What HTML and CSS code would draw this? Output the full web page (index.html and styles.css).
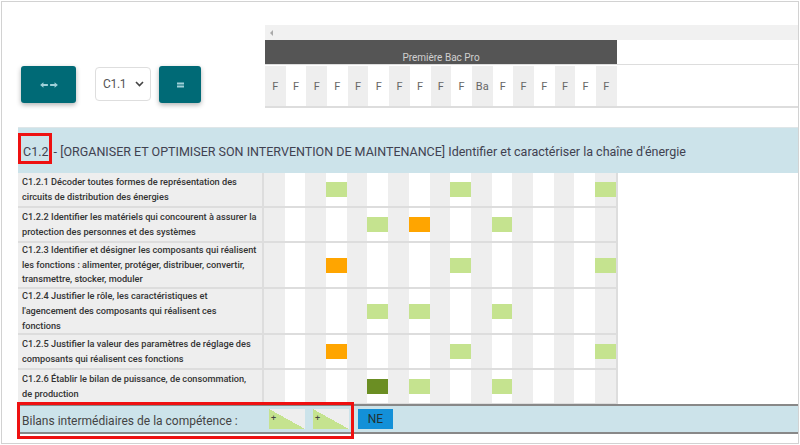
FILE: index.html
```html
<!DOCTYPE html>
<html lang="fr">

<head>
    <meta charset="UTF-8">
    <meta name="viewport" content="width=device-width, initial-scale=1.0">
    <title>Compétences</title>
    <link rel="stylesheet" href="styles.css">
</head>

<body>
    <div class="page">
        <div class="top">
            <div class="controls">
                <button class="btn wide">
                    <svg width="18" height="7" viewBox="0 0 18 7">
                        <path d="M1 3.5 L4 1 L4 2.5 L8 2.5 L8 4.5 L4 4.5 L4 6 Z M17 3.5 L14 1 L14 2.5 L10 2.5 L10 4.5 L14 4.5 L14 6 Z" fill="#9fd0d8" />
                    </svg>
                </button>
                <div class="select">
                    <span>C1.1</span>
                    <svg width="9" height="6" viewBox="0 0 9 6">
                        <path d="M1 1 L4.5 4.5 L8 1" fill="none" stroke="#444" stroke-width="1.6" />
                    </svg>
                </div>
                <button class="btn narrow">
                    <svg width="7" height="6" viewBox="0 0 7 6">
                        <rect x="0" y="0.5" width="7" height="2" fill="#9fd0d8" />
                        <rect x="0" y="3.5" width="7" height="2" fill="#9fd0d8" />
                    </svg>
                </button>
            </div>
            <div class="timeline">
                <div class="scrollbar"><span class="arrow"></span></div>
                <div class="period">
                    <div class="period-name">Première Bac Pro</div>
                </div>
                <div class="letters">
                    <div class="cells">
                        <span>F</span><span>F</span><span>F</span><span>F</span><span>F</span><span>F</span>
                        <span>F</span><span>F</span><span>F</span><span>F</span><span>Ba</span><span>F</span>
                        <span>F</span><span>F</span><span>F</span><span>F</span><span>F</span>
                    </div>
                </div>
            </div>
        </div>

        <div class="competence">
            <span class="code">C1.2</span> - [ORGANISER ET OPTIMISER SON INTERVENTION DE MAINTENANCE] Identifier et caractériser la chaîne d'énergie
        </div>

        <div class="rows"></div>

        <div class="bilan">
            <div class="bilan-label">Bilans intermédiaires de la compétence :</div>
            <div class="bilan-cells">
                <span class="tri">+</span>
                <span class="tri">+</span>
                <span class="ne">NE</span>
            </div>
        </div>

        <div class="mark mark-code"></div>
        <div class="mark mark-bilan"></div>
    </div>
    <script src="app.js"></script>
</body>

</html>
```

FILE: app.js
```js
var rows = [
    { lines: ["C1.2.1 Décoder toutes formes de représentation des", "circuits de distribution des énergies"], marks: { 3: "ok", 9: "ok", 16: "ok" } },
    { lines: ["C1.2.2 Identifier les matériels qui concourent à assurer la", "protection des personnes et des systèmes"], marks: { 5: "ok", 7: "mid", 11: "ok" } },
    { lines: ["C1.2.3 Identifier et désigner les composants qui réalisent", "les fonctions : alimenter, protéger, distribuer, convertir,", "transmettre, stocker, moduler"], marks: { 3: "mid", 9: "ok", 16: "ok" } },
    { lines: ["C1.2.4 Justifier le rôle, les caractéristiques et", "l'agencement des composants qui réalisent ces", "fonctions"], marks: { 5: "ok", 7: "ok", 11: "ok" } },
    { lines: ["C1.2.5 Justifier la valeur des paramètres de réglage des", "composants qui réalisent ces fonctions"], marks: { 3: "mid", 9: "ok", 16: "ok" } },
    { lines: ["C1.2.6 Établir le bilan de puissance, de consommation,", "de production"], marks: { 5: "good", 7: "ok", 11: "ok" } }
];

var list = document.querySelector(".rows");

rows.forEach(function (row) {
    var el = document.createElement("div");
    el.className = "row";

    var label = document.createElement("div");
    label.className = "label";
    var text = document.createElement("div");
    row.lines.forEach(function (line) {
        var span = document.createElement("span");
        span.textContent = line;
        text.appendChild(span);
    });
    label.appendChild(text);
    el.appendChild(label);

    var cells = document.createElement("div");
    cells.className = "cells";
    for (var i = 0; i < 17; i++) {
        var cell = document.createElement("span");
        if (row.marks[i]) {
            var box = document.createElement("i");
            box.className = "box " + row.marks[i];
            cell.appendChild(box);
        }
        cells.appendChild(cell);
    }
    el.appendChild(cells);
    list.appendChild(el);
});
```

FILE: styles.css
```css
html,
body {
    margin: 0;
    font-family: Roboto, "Liberation Sans", sans-serif;
    background-color: #fff;
    color: #444;
}

:root {
    --teal: #006a76;
    --grey-col: #eeeeee;
    --line: #dddddd;
    --band: #cce3ea;
    --ok: #c5e38f;
    --mid: #ffa500;
    --good: #6b8e23;
    --col: 20.7px;
}

.page {
    position: relative;
    margin: 1px;
    height: 441px;
    border: 1px solid #d2d2d2;
    padding-left: 16px;
    overflow: hidden;
}

.top {
    display: flex;
    height: 125px;
}

.controls {
    width: 247px;
    flex: none;
    display: flex;
    align-items: flex-end;
    gap: 8px;
    padding: 0 0 24px 3px;
    box-sizing: border-box;
}

.btn {
    height: 37px;
    border: none;
    border-radius: 3px;
    background-color: var(--teal);
    box-shadow: 0 2px 5px rgba(0, 0, 0, 0.3);
    display: flex;
    align-items: center;
    justify-content: center;
    padding: 0;
}

.btn.wide {
    width: 55px;
    margin-right: 11px;
}

.btn.wide svg {
    width: 20px;
    height: 8px;
}

.btn.narrow {
    width: 42px;
}

.select {
    width: 56px;
    height: 34px;
    margin-bottom: 2px;
    box-sizing: border-box;
    border: 1px solid #dedede;
    border-radius: 4px;
    display: flex;
    align-items: center;
    justify-content: space-between;
    padding: 0 6px 0 7px;
    font-size: 12px;
    letter-spacing: -0.3px;
    color: #555;
}

.timeline {
    flex: 1;
    padding-top: 23px;
}

.scrollbar {
    height: 15px;
    background-color: #f1f1f1;
    position: relative;
}

.scrollbar .arrow {
    position: absolute;
    left: 5px;
    top: 5px;
    border-right: 3px solid #aaa;
    border-top: 3px solid transparent;
    border-bottom: 3px solid transparent;
}

.period {
    height: 24px;
    border-bottom: 1px solid var(--line);
}

.period-name {
    width: 352px;
    height: 100%;
    background-color: #555;
    color: #d0d0d0;
    font-size: 10px;
    text-align: center;
    line-height: 36px;
    overflow: hidden;
}

.letters {
    height: 40px;
    border-bottom: 2px solid var(--line);
    padding-top: 1px;
}

.cells {
    display: grid;
    grid-template-columns: repeat(17, var(--col));
    width: 352px;
}

.cells span {
    display: flex;
    align-items: center;
    justify-content: center;
}

.cells span:nth-child(odd) {
    background-color: var(--grey-col);
}

.letters .cells {
    height: 100%;
}

.letters .cells span {
    font-size: 11px;
    color: #666;
}

.competence {
    height: 46px;
    box-sizing: border-box;
    background-color: var(--band);
    border-top: 1px solid #dfe6e8;
    font-size: 12.5px;
    color: #3f4150;
    padding: 16px 0 0 5px;
    white-space: nowrap;
}

.competence .code {
    margin-right: 2px;
}

.rows {
    width: 600px;
}

.row {
    display: flex;
    border-bottom: 2px solid var(--line);
}

.row .label {
    width: 246px;
    min-height: 33px;
    flex: none;
    display: flex;
    align-items: center;
    background-color: var(--grey-col);
    border-right: 2px solid var(--line);
    font-size: 9.2px;
    line-height: 14.7px;
    color: #333;
    padding: 0 0 0 4px;
    box-sizing: border-box;
    font-weight: 500;
    white-space: nowrap;
    overflow: hidden;
}

.row .label span {
    display: block;
}

.row .cells {
    border-right: 2px solid var(--line);
    box-sizing: content-box;
}

.box {
    display: block;
    width: 100%;
    height: 15px;
}

.box.ok {
    background-color: var(--ok);
}

.box.mid {
    background-color: var(--mid);
}

.box.good {
    background-color: var(--good);
}

.bilan {
    display: flex;
    align-items: center;
    height: 26px;
    background-color: var(--band);
    border-top: 2px solid #888;
    border-bottom: 2px solid #888;
    margin-top: -1px;
}

.bilan-label {
    width: 248px;
    flex: none;
    font-size: 12px;
    color: #444;
    padding-left: 4px;
    box-sizing: border-box;
    padding-top: 3px;
}

.bilan-cells {
    display: flex;
    gap: 8px;
    padding-left: 3px;
    align-items: center;
}

.tri {
    width: 36px;
    height: 20px;
    background: linear-gradient(to top right, var(--ok) 50%, var(--grey-col) 50%);
    font-size: 9px;
    color: #444;
    line-height: 18px;
    padding-left: 2px;
    box-sizing: border-box;
}

.ne {
    width: 35px;
    height: 20px;
    margin-left: 1px;
    background-color: #1390d8;
    color: #233;
    font-size: 12px;
    text-align: center;
    line-height: 20px;
}

.mark {
    position: absolute;
    border: 3px solid #ee1111;
}

.mark-code {
    left: 16px;
    top: 131px;
    width: 28px;
    height: 25px;
}

.mark-bilan {
    left: 15px;
    top: 400px;
    width: 331px;
    height: 31px;
}
```
